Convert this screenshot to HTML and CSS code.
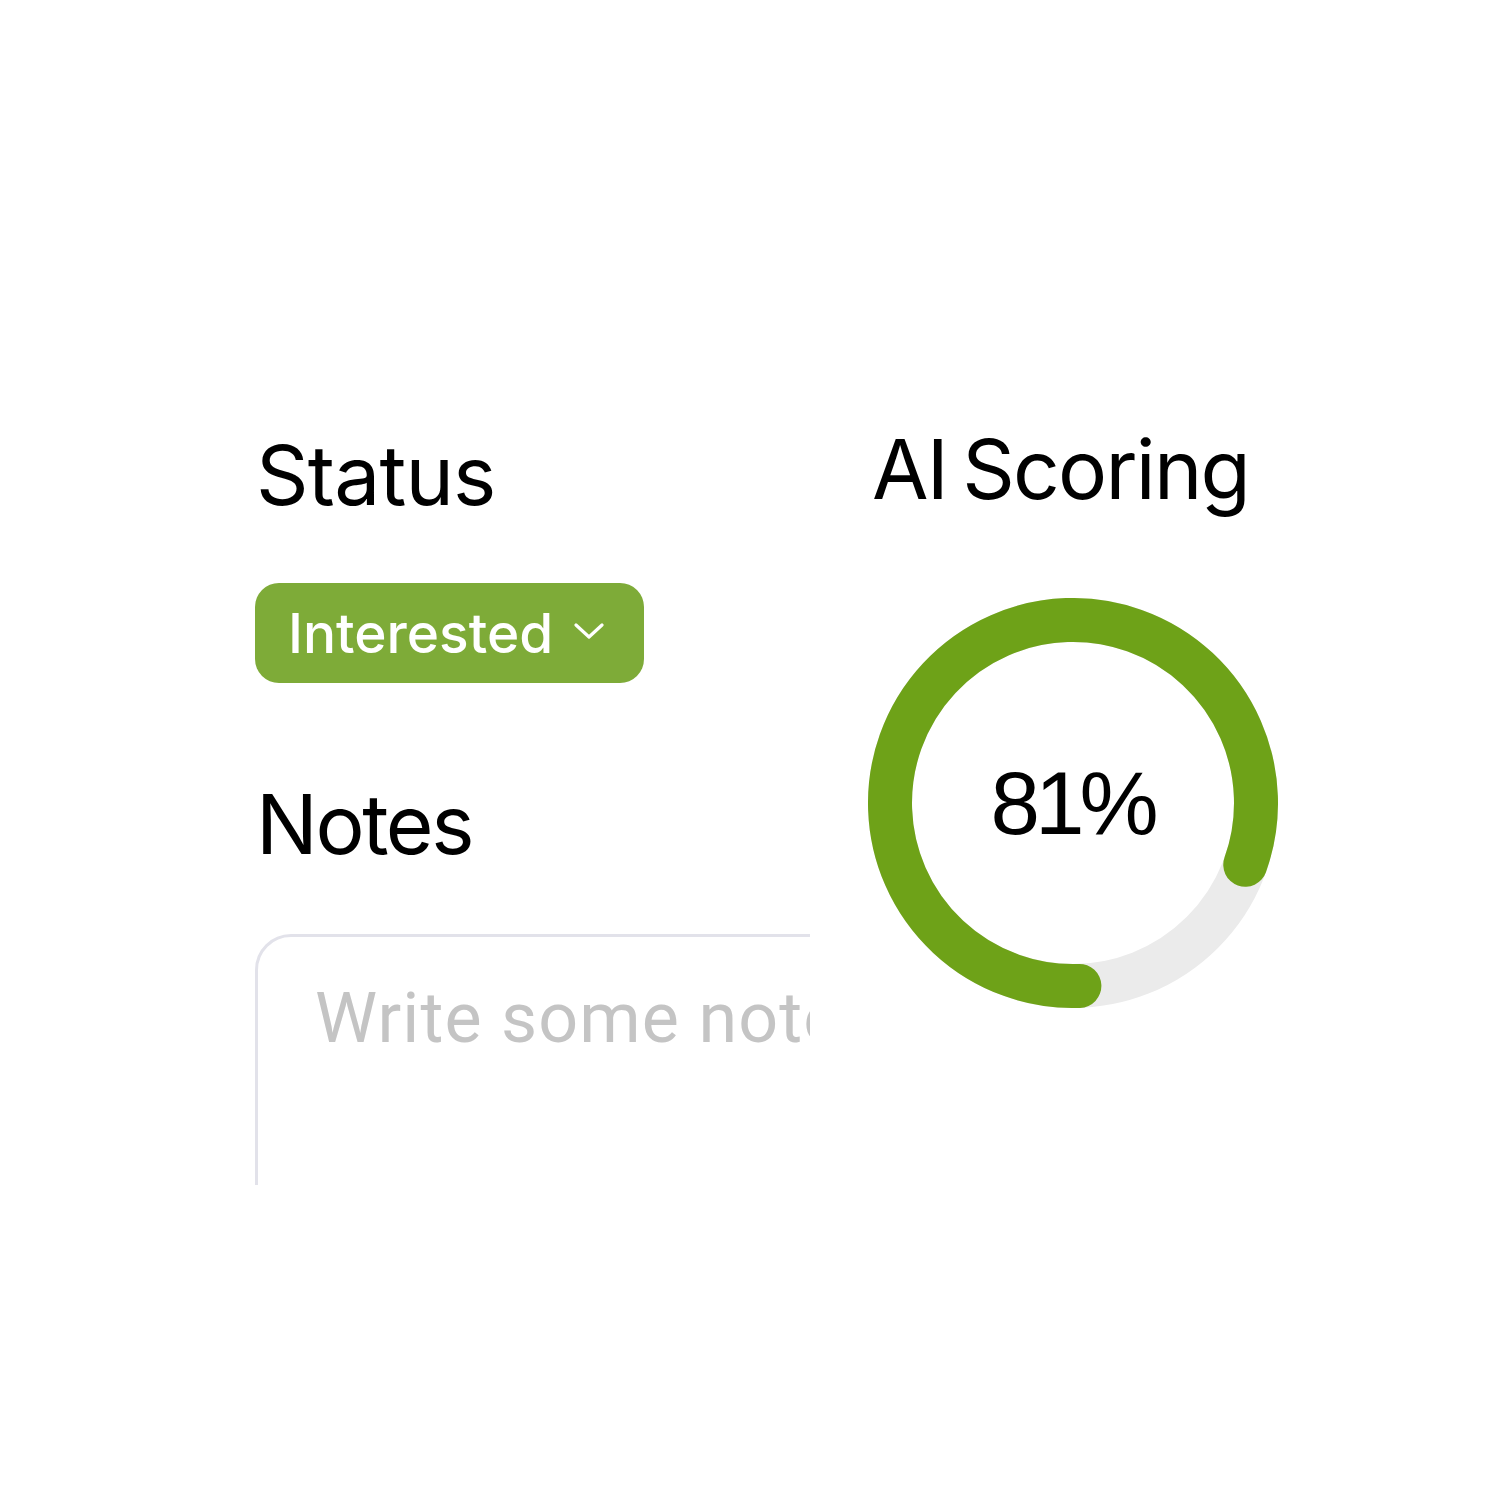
FILE: index.html
```html
<!DOCTYPE html>
<html lang="en">
<head>
<meta charset="utf-8">
<title>Status and AI Scoring</title>
<link rel="stylesheet" href="styles.css">
</head>
<body>
<main class="page">
  <section class="left">
    <h2 class="heading heading-status">Status</h2>
    <button class="pill" type="button">
      <span class="pill-label">Interested</span>
      <svg class="chev" width="30" height="16" viewBox="0 0 30 16" aria-hidden="true">
        <path d="M2 2 L15 14 L28 2" fill="none" stroke="#ffffff" stroke-width="3.2" stroke-linecap="round" stroke-linejoin="round"/>
      </svg>
    </button>
    <h2 class="heading heading-notes">Notes</h2>
    <div class="notes-clip">
      <div class="notes-input"><span class="placeholder">Write some notes...</span></div>
    </div>
  </section>
  <section class="right">
    <h2 class="heading heading-ai">AI Scoring</h2>
    <div class="donut">
      <svg width="410" height="410" viewBox="0 0 410 410" aria-hidden="true">
        <circle cx="205" cy="205" r="183" fill="none" stroke="#ebebeb" stroke-width="44"/>
        <circle cx="205" cy="205" r="183" fill="none" stroke="#6ea218" stroke-width="44" stroke-linecap="round" stroke-dasharray="931.4 1149.8" transform="rotate(88 205 205)"/>
      </svg>
      <span class="donut-value">81%</span>
    </div>
  </section>
</main>
</body>
</html>
```

FILE: styles.css
```css
html, body {
  margin: 0;
  padding: 0;
  background: #ffffff;
}

.page {
  display: flex;
  padding: 429px 0 0 255px;
  box-sizing: border-box;
  min-height: 1489px;
}

.left {
  width: 555px;
  padding-top: 6px;
  display: flex;
  flex-direction: column;
  align-items: flex-start;
}

.right {
  margin-left: 58px;
  display: flex;
  flex-direction: column;
  align-items: flex-start;
}

.heading {
  margin: 0;
  font-family: Inter, "Liberation Sans", sans-serif;
  font-weight: 400;
  font-size: 82px;
  line-height: 82px;
  color: #000000;
  letter-spacing: -0.01em;
}

.heading-status {
  margin-left: 1px;
}

.heading-notes {
  margin-top: 101px;
  margin-left: 1px;
  letter-spacing: -2.4px;
}

.heading-ai {
  margin-left: 4px;
  letter-spacing: -1.8px;
  word-spacing: -6px;
}

.pill {
  margin-top: 66px;
  height: 100px;
  width: 389px;
  box-sizing: border-box;
  padding: 0 40px 0 33px;
  border: none;
  border-radius: 24px;
  background: #7eab38;
  display: flex;
  align-items: center;
  justify-content: space-between;
  cursor: pointer;
}

.pill-label {
  font-family: Inter, "Liberation Sans", sans-serif;
  font-weight: 500;
  font-size: 55px;
  line-height: 1;
  color: #ffffff;
}

.chev {
  display: block;
  margin-top: -4px;
}

.notes-clip {
  margin-top: 68px;
  width: 555px;
  height: 251px;
  overflow: hidden;
}

.notes-input {
  width: 900px;
  height: 400px;
  box-sizing: border-box;
  border: 3px solid #e2e2ea;
  border-radius: 36px;
  padding: 46px 0 0 57px;
}

.placeholder {
  font-family: Roboto, "Liberation Sans", sans-serif;
  font-size: 70px;
  line-height: 70px;
  letter-spacing: 1.1px;
  color: #c4c4c4;
  white-space: nowrap;
  display: block;
}

.donut {
  margin-top: 87px;
  width: 410px;
  height: 410px;
  display: grid;
  place-items: center;
}

.donut svg {
  grid-area: 1 / 1;
  display: block;
}

.donut-value {
  grid-area: 1 / 1;
  font-family: "Liberation Sans", Arial, sans-serif;
  font-size: 89px;
  line-height: 1;
  letter-spacing: -5px;
  color: #000000;
  margin-left: -2px;
}
```
